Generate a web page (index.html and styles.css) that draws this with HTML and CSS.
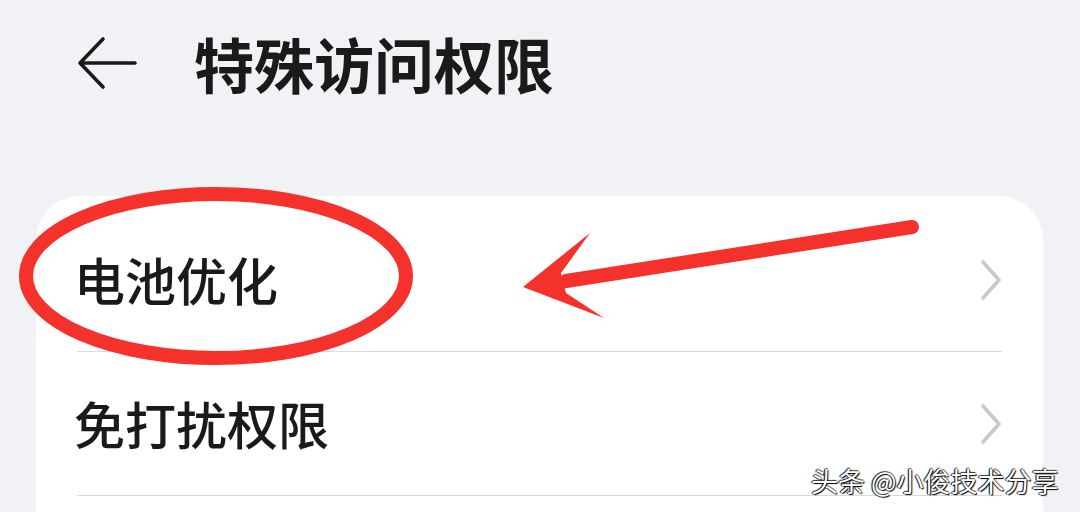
FILE: index.html
```html
<!DOCTYPE html>
<html lang="zh-CN">
<head>
<meta charset="utf-8">
<title>特殊访问权限</title>
<link rel="stylesheet" href="styles.css">
</head>
<body>
<div class="page">
  <header class="topbar">
    <svg class="back" width="60" height="56" viewBox="0 0 60 56" aria-hidden="true">
      <path d="M58 28 H4 M26 4 L3 28 L26 52" fill="none" stroke="#1a1a1a" stroke-width="3.6" stroke-linecap="round" stroke-linejoin="round"/>
    </svg>
    <h1 class="title">特殊访问权限</h1>
  </header>
  <section class="card">
    <div class="row">
      <span class="label">电池优化</span>
      <svg class="chev" width="24" height="42" viewBox="0 0 24 42" aria-hidden="true"><path d="M4 3 L20 21 L4 39" fill="none" stroke="#c9c9c9" stroke-width="3.6" stroke-linecap="round" stroke-linejoin="round"/></svg>
    </div>
    <div class="row">
      <span class="label">免打扰权限</span>
      <svg class="chev" width="24" height="42" viewBox="0 0 24 42" aria-hidden="true"><path d="M4 3 L20 21 L4 39" fill="none" stroke="#c9c9c9" stroke-width="3.6" stroke-linecap="round" stroke-linejoin="round"/></svg>
    </div>
    <div class="row"></div>
  </section>
  <svg class="annot" width="1080" height="512" viewBox="0 0 1080 512" aria-hidden="true">
    <ellipse cx="216" cy="276" rx="190" ry="82" fill="none" stroke="#f5312b" stroke-width="14"/>
    <line x1="912" y1="227" x2="566" y2="281" stroke="#f5312b" stroke-width="14" stroke-linecap="round"/>
    <polygon points="523,287 590,233 561,273 566,293 604,318" fill="#f5312b"/>
  </svg>
  <div class="watermark">头条 @小俊技术分享</div>
</div>
</body>
</html>
```
FILE: styles.css
```css
html, body {
  margin: 0;
  padding: 0;
  background: #f0f2f5;
}
body {
  font-family: "Noto Sans CJK SC", "Noto Sans", sans-serif;
  color: #1a1a1a;
  overflow: hidden;
}
.page {
  position: relative;
  width: 1080px;
  height: 512px;
  overflow: hidden;
}
.topbar {
  display: flex;
  align-items: center;
  height: 126px;
  padding-left: 77px;
  gap: 57px;
}
.back {
  flex: none;
}
.title {
  margin: 0;
  font-size: 60px;
  font-weight: 700;
  line-height: 1;
  color: #1a1a1a;
}
.card {
  margin: 70px 0 0 36px;
  width: 1007px;
  background: #ffffff;
  border-radius: 44px 44px 0 0;
  padding: 12px 41px 0 38px;
  box-sizing: border-box;
}
.row {
  display: flex;
  align-items: center;
  justify-content: space-between;
  height: 144px;
  margin-left: 3px;
  border-bottom: 1.5px solid #d9d9d9;
  box-sizing: border-box;
}
.label {
  font-size: 51px;
  font-weight: 500;
  line-height: 1;
  margin-left: -3px;
  color: #1a1a1a;
}
.chev {
  margin-right: -1px;
}
.annot {
  position: absolute;
  left: 0;
  top: 0;
  pointer-events: none;
}
.watermark {
  position: absolute;
  left: 811px;
  top: 462px;
  font-size: 27px;
  line-height: 38px;
  color: #ffffff;
  white-space: nowrap;
  text-shadow: 1px 1px 1px #000, -1px 0 1px #000, 0 -1px 1px #444;
}
```
